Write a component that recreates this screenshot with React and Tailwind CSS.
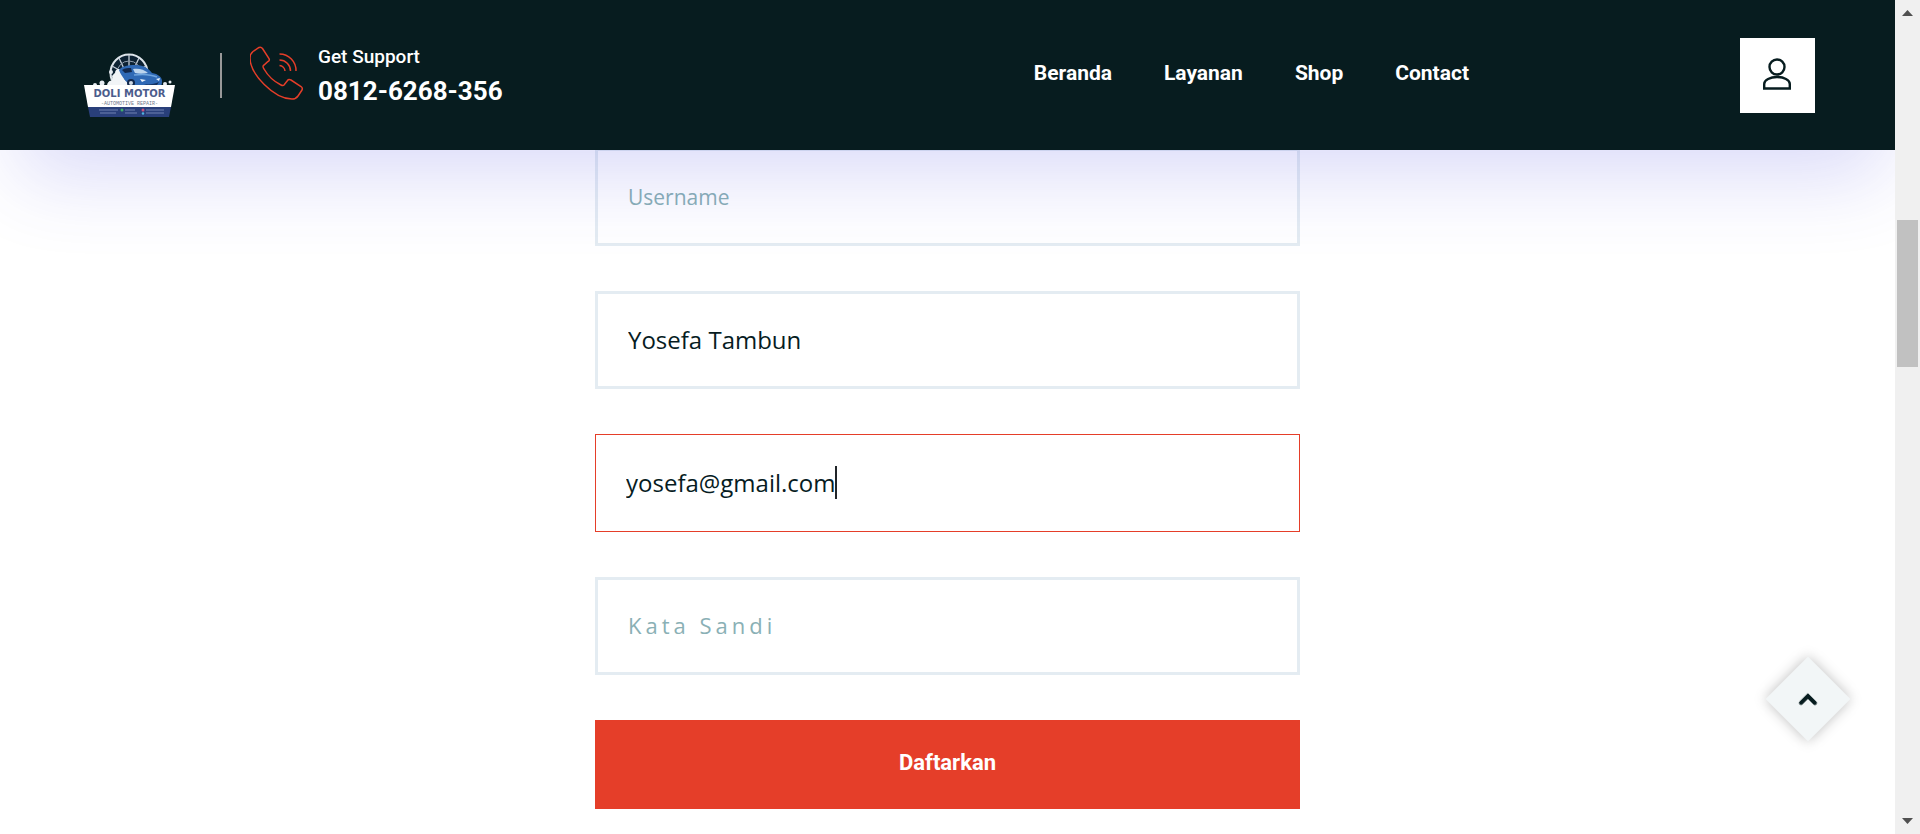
import React from "react";

const links = ["Beranda", "Layanan", "Shop", "Contact"];

const fieldBase =
  "block h-[98px] w-full bg-transparent font-['Open_Sans',sans-serif] text-[#071c1f] outline-none placeholder:text-[#8ab0b5]";
const field = fieldBase + " border-[3px] border-[#e4ecf2] px-[30px]";

function Logo() {
  return (
    <svg viewBox="-4 0 96 64" className="h-16 w-24" role="img" aria-label="Doli Motor">
      <circle cx="45" cy="20" r="18.5" fill="#0d2233" stroke="#dde4ea" strokeWidth="2" />
      <g stroke="#c3ccd6" strokeWidth="1.3">
        <path d="M45 2v17M35 5l7 15M55 5l-7 15M28 13l16 9M62 13l-16 9M27 23l15 2" />
      </g>
      <circle cx="45" cy="20" r="12" fill="none" stroke="#8e9cad" strokeWidth="1" />
      <path d="M23 33c0-4 3-6 5-5 0-5 1-7 3-8 0-4 4-5 6-3 3 2 2 7 4 10 3 1 4 4 8 6z" fill="#f1f4f7" />
      <g fill="#e8edf2">
        <circle cx="18" cy="30" r="2.500" />
        <circle cx="11" cy="32" r="2" />
        <circle cx="27" cy="19" r="2" />
        <circle cx="81" cy="31" r="2" />
        <circle cx="86" cy="29" r="1.500" />
      </g>
      <path d="M35 17c2-3 7-5 17-5 8 0 13 4 16 8 6 1 10 4 10 8 0 4-1 6-4 6-8 2-18 2-25 0-5-3-11-9-14-17z" fill="#2f69b5" />
      <path d="M49 16c5-1 11 0 15 4-5 1-9 1-13 0z" fill="#bdd5ee" />
      <path d="M38 17c3-2 6-2 9-2l1 4-7 1z" fill="#12284c" />
      <path d="M50 22c8-1 16-1 23 2" fill="none" stroke="#6fa4dd" strokeWidth="1.500" />
      <path d="M56 26l6 1-4 2zM72 26l4-1-1 3z" fill="#e9f2fb" />
      <path d="M60 31c5 1 10 0 15-2l-2 3c-4 1-9 1-13-1z" fill="#14315f" />
      <circle cx="47" cy="30" r="4" fill="#12284c" />
      <circle cx="47" cy="30" r="2" fill="#cfd9e4" />
      <path d="M0 32h91l-4 22H4z" fill="#fff" />
      <path d="M4 54h83l-2 10H6z" fill="#293f7a" />
      <text x="45.500" y="43.500" textAnchor="middle" fontFamily="'DejaVu Sans', sans-serif" fontWeight="700" fontSize="10" fill="#4b5c8c">DOLI MOTOR</text>
      <text x="45.500" y="51.500" textAnchor="middle" fontFamily="'Liberation Mono', monospace" fontSize="5" fill="#6d7789">-AUTOMOTIVE REPAIR-</text>
      <path d="M15 57h19M16 60h16M41 57h10M41 60h12M62 57h18M62 60h18" stroke="#8fa0cc" strokeWidth="1" opacity=".7" />
      <circle cx="38" cy="57" r="1.500" fill="#3fae6a" />
      <circle cx="59" cy="57" r="1.500" fill="#c9527e" />
      <circle cx="59" cy="60.500" r="1.200" fill="#4fb3e0" />
    </svg>
  );
}

export default function App() {
  return (
    <div className="flex h-screen bg-white font-[Roboto,sans-serif]">
      <div className="flex min-w-0 flex-1 flex-col overflow-hidden">
        <header className="relative z-10 flex h-[150px] shrink-0 items-center bg-[#071c1f] px-20 text-white shadow-[5px_42px_80px_-15px_rgba(65,65,225,0.19)]">
          <a href="#beranda" className="mt-5 shrink-0">
            <Logo />
          </a>
          <div className="mr-7 ml-11 h-[45px] w-0.5 bg-[#999]" />
          <div className="flex min-w-0 flex-1 items-center gap-3">
            <svg viewBox="1 0 56 56" className="mb-1 size-14 shrink-0" fill="none" stroke="#e53e29" strokeWidth="1.5">
              <path d="M4 6.500l6-4q2-1 3.500 1l6.500 10q1 2-1 3l-4 3.500q-2 1 0 4c4 7 9 12 17 16q2 1 3 0l3.500-4.500q1-1.500 3.500-.5l10 6.500q2 1.500 1 3.500l-4 6q-2 3-6 3C25 54 1 29 1 13q0-4 3-6.500z" />
              <path d="M30.500 9a16.500 16.500 0 0 1 16.500 17M30.500 15a11 11 0 0 1 11 11M30.500 20.500a6 6 0 0 1 5.500 5.500" />
            </svg>
            <div className="pt-1">
              <div className="text-[19px] leading-7 font-medium">Get Support</div>
              <a href="tel:08126268356" className="block text-[26px] leading-10 font-bold">0812-6268-356</a>
            </div>
          </div>
          <nav className="flex gap-[52px] pb-0.5 text-[21px] font-bold">
            {links.map((l) => (
              <a key={l} href={"#" + l.toLowerCase()}>{l}</a>
            ))}
          </nav>
          <div className="flex w-[346px] justify-end">
            <button aria-label="Akun" className="flex size-[75px] items-center justify-center bg-white">
              <svg viewBox="0 0 28 32" className="mr-0.5 mb-0.5 h-8 w-7" fill="none" stroke="#071c1f" strokeWidth="2.4">
                <circle cx="14" cy="9" r="7.500" />
                <path d="M1.200 30.500V26c0-4 6-7 12.800-7s12.800 3 12.800 7v4.500z" />
              </svg>
            </button>
          </div>
        </header>
        <main className="-mt-0.5 flex-1">
          <form className="mx-auto flex w-full max-w-[705px] flex-col gap-[45px]">
            <input aria-label="Username" placeholder="Username" className={field + " text-[21px]"} />
            <input aria-label="Nama" defaultValue="Yosefa Tambun" className={field + " pb-0.5 text-2xl"} />
            <div className="relative">
              <input
                type="email"
                aria-label="Email"
                defaultValue="yosefa@gmail.com"
                className={fieldBase + " border border-[#e53e29] px-[30px] pb-0.5 text-2xl"}
              />
              <span className="absolute top-8 left-[240px] h-[33px] w-0.5 bg-[#212529]" />
            </div>
            <input type="password" aria-label="Kata Sandi" placeholder="Kata Sandi" className={field + " pb-0.5 text-[22px] tracking-[4px]"} />
            <button type="button" className="h-[89px] bg-[#e53e29] pb-1 text-[22px] font-bold text-white">Daftarkan</button>
          </form>
        </main>
      </div>
      <div className="flex w-[25px] shrink-0 flex-col items-center bg-[#f0f0f0]">
        <svg viewBox="0 0 11 6" className="mt-2.5 h-1.5 w-[11px]" fill="#505050"><path d="M5.500 0L11 6H0z" /></svg>
        <div className="mt-[204px] h-[147px] w-[21px] bg-[#c1c1c1]" />
        <svg viewBox="0 0 11 6" className="mt-auto mb-2.5 h-1.5 w-[11px]" fill="#505050"><path d="M5.500 6L11 0H0z" /></svg>
      </div>
      <a
        href="#top"
        aria-label="Kembali ke atas"
        className="fixed right-[82px] bottom-[105px] flex size-[60px] rotate-45 items-center justify-center bg-[#f2f6f7] shadow-[0_0_12px_rgba(0,0,0,0.25)]"
      >
        <svg viewBox="0 0 20 14" className="h-3.5 w-5 -rotate-45" fill="none" stroke="#071c1f" strokeWidth="4" strokeLinecap="round">
          <path d="M3 11l7-7 7 7" />
        </svg>
      </a>
    </div>
  );
}
